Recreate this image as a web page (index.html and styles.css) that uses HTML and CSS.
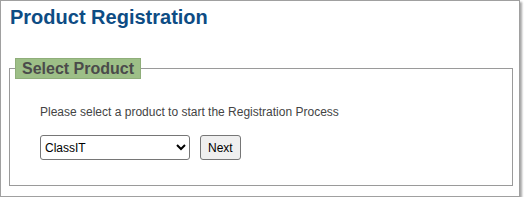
FILE: index.html
```html
<!DOCTYPE html>
<html>
<head>
<meta charset="utf-8">
<link rel="stylesheet" href="styles.css">
</head>
<body>
<div class="frame">
  <h1 class="title">Product Registration</h1>
  <fieldset class="box">
    <legend class="box-legend">Select Product</legend>
    <div class="box-body">
      <p class="intro">Please select a product to start the Registration Process</p>
      <div class="controls">
        <select class="product-select">
          <option>ClassIT</option>
        </select>
        <button class="next-btn" type="button">Next</button>
      </div>
    </div>
  </fieldset>
</div>
</body>
</html>
```
FILE: styles.css
```css
html, body {
  margin: 0;
  padding: 0;
  background: #ffffff;
}
body {
  font-family: "Liberation Sans", Arial, sans-serif;
}
.frame {
  box-sizing: border-box;
  width: 520px;
  height: 197px;
  border: 1px solid #a0a0a0;
  box-shadow: 2px 2px 2px rgba(0, 0, 0, 0.35);
  padding: 5px 6px 0 8px;
  background: #fff;
}
.title {
  margin: 0;
  padding-left: 1px;
  font-size: 20px;
  line-height: 23px;
  font-weight: bold;
  color: #0d4c84;
}
.box {
  margin: 29px 0 0 0;
  border: 1px solid #9a9a9a;
  padding: 0 0 0 5px;
  min-width: 0;
}
.box-legend {
  margin: 0;
  padding: 0 6px;
  background: #9dbf87;
  border: 1px solid #8fae7a;
  font-size: 16px;
  line-height: 19px;
  font-weight: bold;
  color: #4b4b4b;
}
.box-body {
  padding: 26px 25px 25px 25px;
}
.intro {
  margin: 0 0 16px 0;
  font-size: 12px;
  line-height: 14px;
  color: #444;
}
.controls {
  display: flex;
  align-items: center;
  gap: 10px;
}
.product-select {
  width: 150px;
  height: 25px;
  font-family: "Liberation Sans", Arial, sans-serif;
  font-size: 12px;
  color: #000;
  border: 1px solid #767676;
  border-radius: 3px;
  background: #fff;
}
.next-btn {
  height: 25px;
  padding: 0 7px;
  font-family: "Liberation Sans", Arial, sans-serif;
  font-size: 12px;
  color: #000;
  background: #efefef;
  border: 1px solid #767676;
  border-radius: 3px;
}
```
